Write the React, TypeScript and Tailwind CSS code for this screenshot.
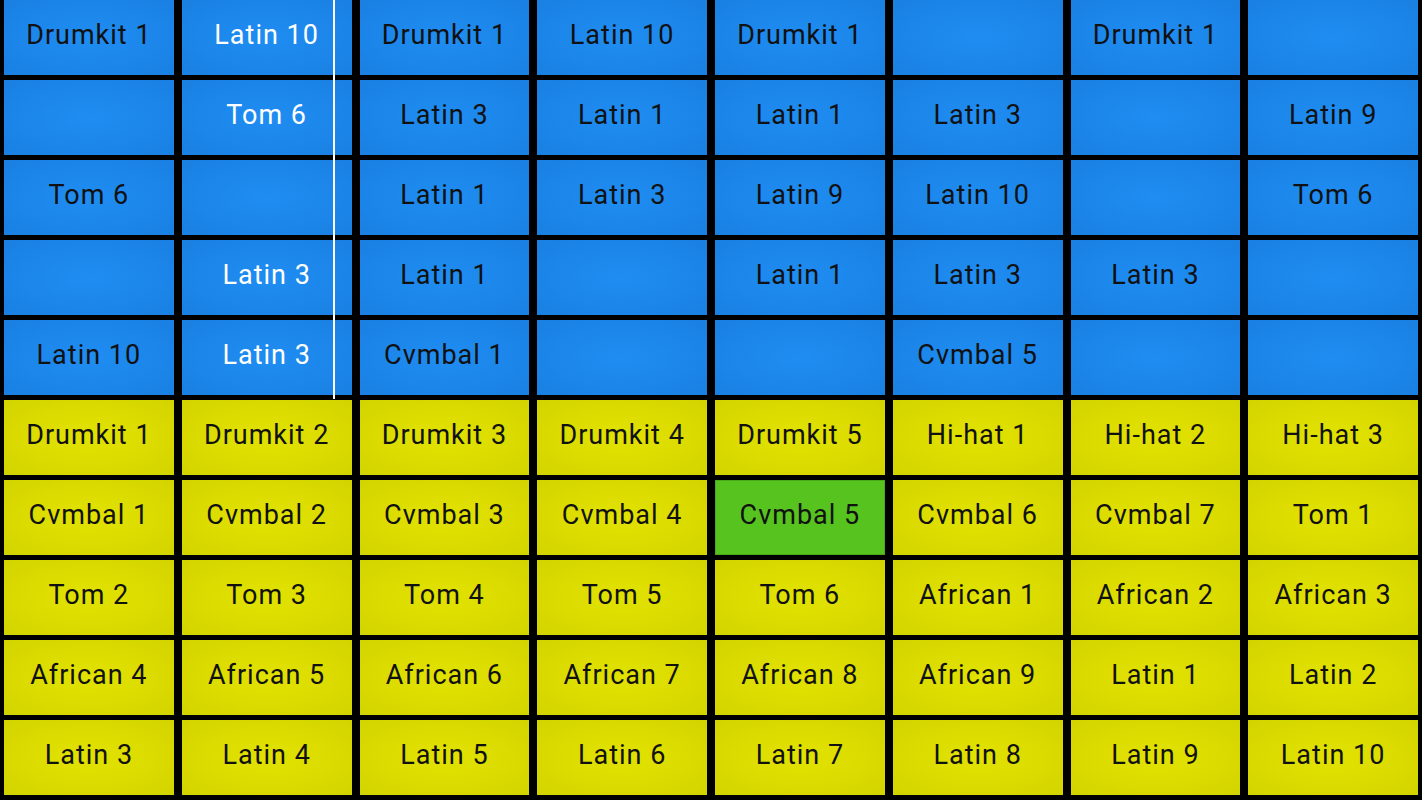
import React from "react";

const blue: string[][] = [
  ["Drumkit 1", "Latin 10", "Drumkit 1", "Latin 10", "Drumkit 1", "", "Drumkit 1", ""],
  ["", "Tom 6", "Latin 3", "Latin 1", "Latin 1", "Latin 3", "", "Latin 9"],
  ["Tom 6", "", "Latin 1", "Latin 3", "Latin 9", "Latin 10", "", "Tom 6"],
  ["", "Latin 3", "Latin 1", "", "Latin 1", "Latin 3", "Latin 3", ""],
  ["Latin 10", "Latin 3", "Cvmbal 1", "", "", "Cvmbal 5", "", ""],
];

const yellow: string[][] = [
  ["Drumkit 1", "Drumkit 2", "Drumkit 3", "Drumkit 4", "Drumkit 5", "Hi-hat 1", "Hi-hat 2", "Hi-hat 3"],
  ["Cvmbal 1", "Cvmbal 2", "Cvmbal 3", "Cvmbal 4", "Cvmbal 5", "Cvmbal 6", "Cvmbal 7", "Tom 1"],
  ["Tom 2", "Tom 3", "Tom 4", "Tom 5", "Tom 6", "African 1", "African 2", "African 3"],
  ["African 4", "African 5", "African 6", "African 7", "African 8", "African 9", "Latin 1", "Latin 2"],
  ["Latin 3", "Latin 4", "Latin 5", "Latin 6", "Latin 7", "Latin 8", "Latin 9", "Latin 10"],
];

export default function App() {
  return (
    <div
      className="relative w-[1422px] h-[800px] bg-black overflow-hidden"
      style={{ fontFamily: "Roboto, 'Noto Sans', sans-serif" }}
    >
      <div className="grid grid-cols-8 grid-rows-[repeat(10,75px)] gap-x-[8px] gap-y-[5px] pl-[4px] pr-[4px]">
        {blue.map((row, r) =>
          row.map((t, c) => (
            <div
              key={`b${r}-${c}`}
              className={`flex items-center justify-center pb-[4px] text-[27px] tracking-[1px] bg-[radial-gradient(ellipse_at_center,#1f8df2_0%,#1c86ea_55%,#1a80e2_100%)] ${
                c === 1 ? "text-white" : "text-[#111]"
              }`}
            >
              {t}
            </div>
          ))
        )}
        {yellow.map((row, r) =>
          row.map((t, c) => {
            const green = r === 1 && c === 4;
            return (
              <div
                key={`y${r}-${c}`}
                className={`flex items-center justify-center pb-[4px] text-[27px] tracking-[1px] text-[#111] ${
                  green
                    ? "bg-[#57c31f] shadow-[inset_0_0_0_1px_#4aa81a]"
                    : "bg-[radial-gradient(ellipse_at_center,#e2e200_0%,#dbdb00_55%,#d3d300_100%)]"
                }`}
              >
                {t}
              </div>
            );
          })
        )}
      </div>
      <div className="absolute left-[333px] top-0 w-[2px] h-[399px] bg-white" />
    </div>
  );
}
